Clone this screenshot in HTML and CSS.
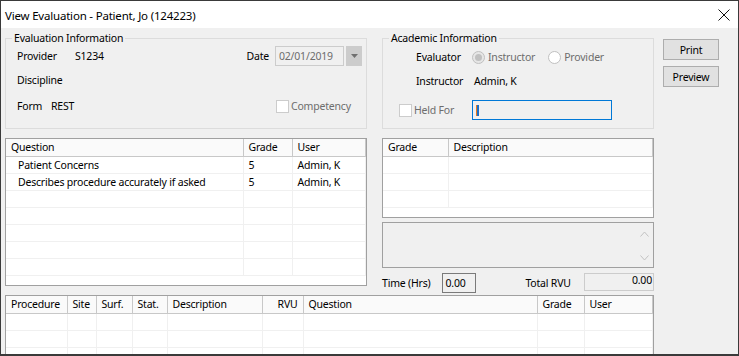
FILE: index.html
```html
<!DOCTYPE html>
<html lang="en">
<head>
  <meta charset="UTF-8">
  <title>View Evaluation</title>
  <link rel="stylesheet" href="styles.css">
</head>
<body>

  <div class="window">
    <div class="titlebar">
      <span class="title">View Evaluation - Patient, Jo (124223)</span>
      <svg class="close" width="12" height="12" viewBox="0 0 12 12">
        <path d="M0.5 0.5 L11.5 11.5 M11.5 0.5 L0.5 11.5" stroke="#111" stroke-width="1" fill="none"/>
      </svg>
    </div>

    <div class="client">

      <!-- top: the two group boxes and the buttons -->
      <div class="top">
        <fieldset class="group eval">
          <legend>Evaluation Information</legend>
          <div class="row r1">
            <span class="lbl w58">Provider</span>
            <span>S1234</span>
            <div class="date-box">
              <span class="lbl">Date</span>
              <span class="date-input">02/01/2019</span>
              <span class="drop"><svg width="7" height="4" viewBox="0 0 7 4"><path d="M0 0 H7 L3.5 4 Z" fill="#707070"/></svg></span>
            </div>
          </div>
          <div class="row r2">
            <span class="lbl">Discipline</span>
          </div>
          <div class="row r3">
            <span class="lbl w34">Form</span>
            <span>REST</span>
            <label class="check comp"><span class="box"></span><span class="dis">Competency</span></label>
          </div>
        </fieldset>

        <fieldset class="group acad">
          <legend>Academic Information</legend>
          <div class="arow a1">
            <span class="alabel">Evaluator</span>
            <span class="radio checked"></span><span class="dis">Instructor</span>
            <span class="radio second"></span><span class="dis">Provider</span>
          </div>
          <div class="arow a2">
            <span class="alabel">Instructor</span>
            <span class="val">Admin, K</span>
          </div>
          <div class="arow a3">
            <label class="check held"><span class="box"></span><span class="dis">Held For</span></label>
            <span class="text-input focus"><span class="caret"></span></span>
          </div>
        </fieldset>

        <div class="buttons">
          <button class="btn">Print</button>
          <button class="btn">Preview</button>
        </div>
      </div>

      <!-- middle: questions list and the grade side panel -->
      <div class="middle">
        <div class="list">
          <table>
            <colgroup><col style="width:237px"><col style="width:49px"><col></colgroup>
            <thead><tr><th>Question</th><th>Grade</th><th>User</th></tr></thead>
            <tbody>
              <tr><td class="indent">Patient Concerns</td><td>5</td><td>Admin, K</td></tr>
              <tr><td class="indent">Describes procedure accurately if asked</td><td>5</td><td>Admin, K</td></tr>
              <tr><td></td><td></td><td></td></tr>
              <tr><td></td><td></td><td></td></tr>
              <tr><td></td><td></td><td></td></tr>
              <tr><td></td><td></td><td></td></tr>
              <tr><td></td><td></td><td></td></tr>
            </tbody>
          </table>
        </div>

        <div class="side">
          <div class="list grades">
            <table>
              <colgroup><col style="width:65px"><col></colgroup>
              <thead><tr><th>Grade</th><th>Description</th></tr></thead>
              <tbody>
                <tr><td></td><td></td></tr>
                <tr><td></td><td></td></tr>
                <tr><td></td><td></td></tr>
              </tbody>
            </table>
          </div>

          <div class="memo">
            <div class="scroll">
              <svg width="9" height="6" viewBox="0 0 9 6"><path d="M0.5 5.5 L4.5 1 L8.5 5.5" stroke="#c2c2c2" fill="none"/></svg>
              <svg width="9" height="6" viewBox="0 0 9 6"><path d="M0.5 0.5 L4.5 5 L8.5 0.5" stroke="#c2c2c2" fill="none"/></svg>
            </div>
          </div>

          <div class="time-row">
            <span class="lbl">Time (Hrs)</span>
            <span class="time-input">0.00</span>
            <span class="lbl rvu-lbl">Total RVU</span>
            <span class="rvu-box">0.00</span>
          </div>
        </div>
      </div>

      <!-- bottom: procedures list -->
      <div class="list procs">
        <table>
          <colgroup>
            <col style="width:61px"><col style="width:29px"><col style="width:36px"><col style="width:35px">
            <col style="width:95px"><col style="width:41px"><col style="width:234px"><col style="width:47px"><col>
          </colgroup>
          <thead>
            <tr><th>Procedure</th><th>Site</th><th>Surf.</th><th>Stat.</th><th>Description</th><th class="num">RVU</th><th>Question</th><th>Grade</th><th>User</th></tr>
          </thead>
          <tbody>
            <tr><td></td><td></td><td></td><td></td><td></td><td></td><td></td><td></td><td></td></tr>
            <tr><td></td><td></td><td></td><td></td><td></td><td></td><td></td><td></td><td></td></tr>
            <tr><td></td><td></td><td></td><td></td><td></td><td></td><td></td><td></td><td></td></tr>
          </tbody>
        </table>
      </div>

    </div>
  </div>

</body>
</html>
```

FILE: styles.css
```css
:root {
  --face: #f0f0f0;
  --text: #000000;
  --disabled: #6d6d6d;
  --group-line: #dcdcdc;
  --list-border: #a0a0a0;
  --grid-line: #f0f0f0;
}

* { margin: 0; padding: 0; box-sizing: border-box; }

body {
  font-family: 'Noto Sans', 'DejaVu Sans', sans-serif;
  font-size: 10.5px;
  letter-spacing: -0.2px;
  color: var(--text);
  background: #fff;
}

.window {
  width: 739px;
  height: 356px;
  border: 1px solid #3a3a3a;
  border-bottom-width: 2px;
  overflow: hidden;
  display: flex;
  flex-direction: column;
}

.titlebar {
  height: 27px;
  background: #fff;
  display: flex;
  align-items: center;
  justify-content: space-between;
  padding: 1px 8px 0 4px;
  flex-shrink: 0;
}

.title {
  font-size: 11.5px;
}

.client {
  flex: 1;
  background: var(--face);
  padding: 3px 0 0 4px;
  overflow: hidden;
}

/* group boxes */
.top {
  display: flex;
  align-items: flex-start;
}

.group {
  border: 1px solid var(--group-line);
  border-radius: 0;
  height: 98px;
}

.group legend {
  padding: 0 2px;
  line-height: 14px;
}

.eval {
  width: 362px;
  padding: 0 4px 0 11px;
}

.eval legend { margin-left: -5px; }

.acad {
  width: 272px;
  margin-left: 15px;
  padding: 0 0 0 33px;
}

.acad legend { margin-left: -27px; }

.row {
  display: flex;
  align-items: center;
}

.r1 { height: 22px; }
.r2 { height: 26px; }
.r3 { height: 26px; }

.w58 { width: 58px; }
.w34 { width: 34px; }

.date-box {
  margin-left: auto;
  display: flex;
  align-items: center;
}

.date-box .lbl { margin-right: 6px; }

.date-input {
  width: 69px;
  height: 20px;
  border: 1px solid #cccccc;
  color: var(--disabled);
  padding-left: 3px;
  line-height: 18px;
}

.drop {
  width: 16px;
  height: 20px;
  margin-left: 2px;
  background: #cccccc;
  display: flex;
  align-items: center;
  justify-content: center;
}

.check {
  display: flex;
  align-items: center;
}

.check .box {
  width: 13px;
  height: 13px;
  border: 1px solid #cccccc;
  background: #fff;
  margin-right: 2px;
}

.comp {
  margin-left: auto;
  width: 86px;
}

.dis { color: var(--disabled); }

.arow {
  display: flex;
  align-items: center;
}

.a1 { height: 24px; }
.a2 { height: 23px; }
.a3 { height: 36px; }

.alabel { width: 56px; }

.radio {
  width: 13px;
  height: 13px;
  border-radius: 50%;
  border: 1px solid #c0c0c0;
  background: #fff;
  margin-right: 3px;
  display: flex;
  align-items: center;
  justify-content: center;
}

.radio.checked { background: #e6e6e6; }

.radio.checked::after {
  content: "";
  width: 7px;
  height: 7px;
  border-radius: 50%;
  background: #c0c0c0;
}

.radio.second { margin-left: 13px; }

.val { margin-left: 2px; }

.held {
  margin-left: -17px;
  width: 73px;
}

.text-input {
  width: 140px;
  height: 20px;
  border: 1px solid #0078d7;
  background: var(--face);
  display: flex;
  align-items: center;
  padding-left: 3px;
}

.caret {
  width: 3px;
  height: 11px;
  border-left: 1px solid #e87a1e;
  background: #1a6fc8;
}

.buttons {
  margin-left: 9px;
  margin-top: 8px;
  display: flex;
  flex-direction: column;
  gap: 6px;
}

.btn {
  width: 56px;
  height: 21px;
  background: #e1e1e1;
  border: 1px solid #adadad;
  font-family: inherit;
  font-size: 10.5px;
  letter-spacing: -0.2px;
  color: var(--text);
}

/* list views */
.middle {
  display: flex;
  gap: 15px;
  margin-top: 9px;
  height: 155px;
}

.list {
  border: 1px solid var(--list-border);
  background: #fff;
  overflow: hidden;
}

.middle > .list {
  width: 362px;
  height: 148px;
}

table {
  width: 100%;
  border-collapse: collapse;
  table-layout: fixed;
}

th {
  height: 17px;
  font-weight: normal;
  text-align: left;
  padding: 0 5px;
  background: #fafafa;
  border-bottom: 1px solid #c8c8c8;
  border-right: 1px solid #c8c8c8;
  white-space: nowrap;
}

th.num { text-align: right; }

td {
  height: 17px;
  padding: 0 5px;
  border-right: 1px solid var(--grid-line);
  border-bottom: 1px solid var(--grid-line);
  white-space: nowrap;
  overflow: hidden;
}

td.indent { padding-left: 12px; }

.side {
  width: 272px;
  display: flex;
  flex-direction: column;
}

.grades { height: 80px; }

.memo {
  height: 46px;
  margin-top: 4px;
  border: 1px solid var(--list-border);
  background: var(--face);
  display: flex;
  justify-content: flex-end;
}

.scroll {
  width: 17px;
  display: flex;
  flex-direction: column;
  justify-content: space-between;
  align-items: center;
  padding: 8px 0 6px;
}

.time-row {
  display: flex;
  align-items: center;
  margin-top: 5px;
  height: 20px;
}

.time-input {
  width: 34px;
  height: 20px;
  margin-left: 12px;
  border: 1px solid #7a7a7a;
  padding-left: 2px;
  line-height: 18px;
}

.rvu-lbl { margin-left: 49px; }

.rvu-box {
  width: 70px;
  height: 18px;
  margin-left: auto;
  border: 1px solid #cccccc;
  text-align: right;
  padding-right: 1px;
  line-height: 12px;
  align-self: flex-start;
}

.procs {
  width: 649px;
  margin-top: 2px;
  height: 70px;
}
```
